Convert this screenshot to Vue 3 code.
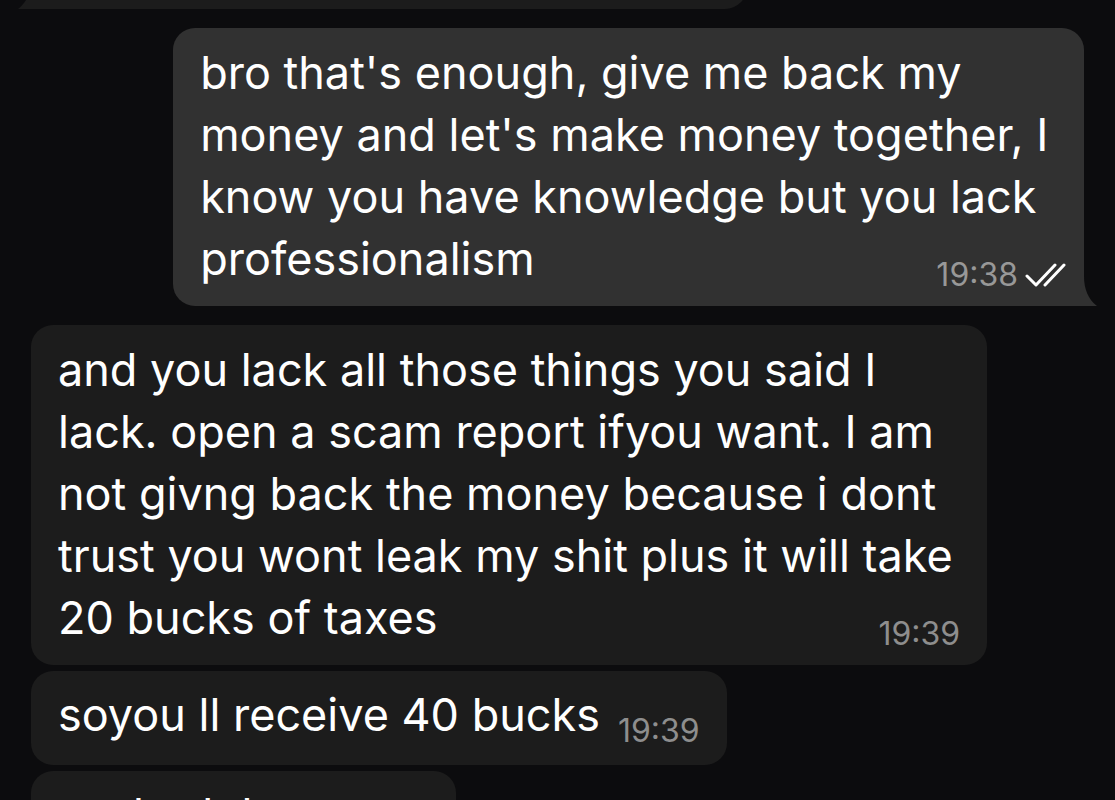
<script setup>
const messages = [
  { id: 1, side: 'sent', size: 'large', time: '19:38', read: true, tail: true,
    lines: ["bro that's enough, give me back my", "money and let's make money together, I", 'know you have knowledge but you lack', 'professionalism'] },
  { id: 2, side: 'received', size: 'full', time: '19:39',
    lines: ['and you lack all those things you said I', 'lack. open a scam report ifyou want. I am', 'not givng back the money because i dont', 'trust you wont leak my shit plus it will take', '20 bucks of taxes'] },
  { id: 3, side: 'received', size: 'single', time: '19:39', lines: ['soyou ll receive 40 bucks'] },
  { id: 4, side: 'received', size: 'single', time: '19:39', lines: ['we both lose'] },
]
</script>

<template>
  <main class="chat">
    <div class="bubble received previous">
      <svg class="tail" viewBox="0 0 14 30" aria-hidden="true"><path d="M0 0H1C1 13 5 23 14 30H0Z" /></svg>
    </div>
    <article v-for="m in messages" :key="m.id" class="bubble" :class="[m.side, m.size]">
      <span v-for="line in m.lines.slice(0, -1)" :key="line" class="line">{{ line }}</span>
      <div class="last">
        <span class="line">{{ m.lines[m.lines.length - 1] }}</span>
        <div class="meta">
          <time>{{ m.time }}</time>
          <svg v-if="m.read" class="checks" viewBox="0 0 42 26" role="img" aria-label="Read">
            <path d="M3 14L12 23L31 3M21 23L40 3" />
          </svg>
        </div>
      </div>
      <svg v-if="m.tail" class="tail" viewBox="0 0 14 30" aria-hidden="true"><path d="M0 0H1C1 13 5 23 14 30H0Z" /></svg>
    </article>
  </main>
</template>

<style>
body {
  background: #0c0c0e;
}
</style>

<style scoped>
.chat {
  display: flex;
  flex-direction: column;
  box-sizing: border-box;
  height: 100vh;
  padding: 0 31px;
  overflow: hidden;
  background: #0c0c0e;
  color: #fff;
  font-family: Inter, "Liberation Sans", sans-serif;
}
.bubble {
  position: relative;
  flex: none;
  box-sizing: border-box;
  margin-top: 19px;
  padding: 14px 27px 16px;
  border-radius: 22px;
}
.large {
  width: 86.5%;
}
.full {
  width: 90.8%;
}
.single {
  width: fit-content;
  margin-top: 6px;
  padding-top: 13px;
  padding-bottom: 19px;
}
.received {
  align-self: flex-start;
  background: #1c1c1c;
}
.sent {
  align-self: flex-end;
  background: #313131;
  border-bottom-right-radius: 0;
}
.previous {
  width: 68%;
  height: 94px;
  margin-top: -85px;
  border-bottom-left-radius: 0;
}
.line {
  display: block;
  font-size: 45px;
  line-height: 62px;
}
.last {
  display: flex;
  align-items: flex-end;
  justify-content: space-between;
  gap: 18px;
}
.meta {
  display: flex;
  align-items: center;
  gap: 6px;
  color: #8e8e8e;
  font-size: 32px;
  line-height: 30px;
}
.sent .meta {
  margin-right: -9px;
  color: #989898;
}
.checks {
  width: 42px;
  height: 26px;
  fill: none;
  stroke: #fff;
  stroke-width: 3;
  stroke-linecap: round;
  stroke-linejoin: round;
}
.tail {
  position: absolute;
  bottom: 0;
  width: 14px;
  height: 30px;
}
.sent .tail {
  left: calc(100% - 1px);
  fill: #313131;
}
.received .tail {
  right: calc(100% - 1px);
  fill: #1c1c1c;
  transform: scaleX(-1);
}
</style>
